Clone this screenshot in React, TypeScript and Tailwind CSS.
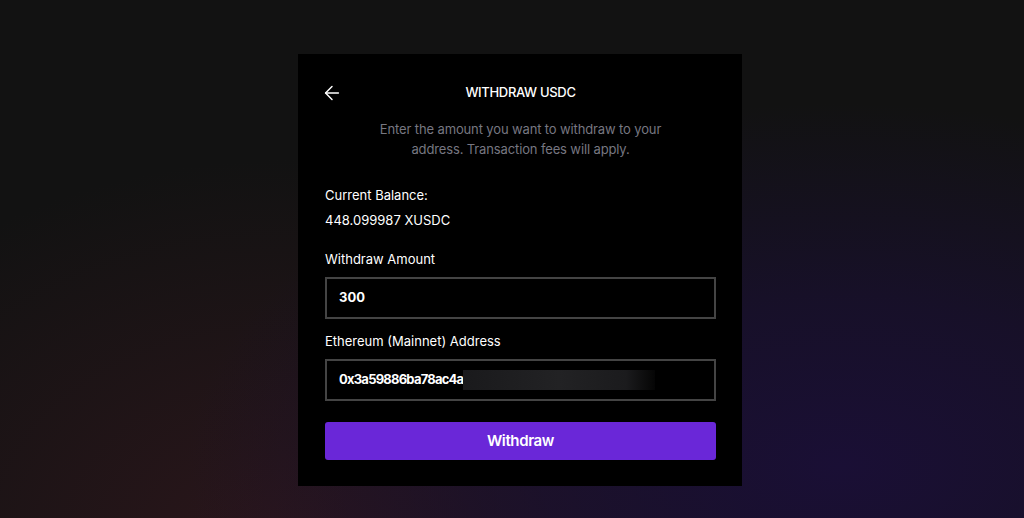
import { ArrowLeft } from 'lucide-react';

export default function App() {
  return (
    <div
      className="min-h-screen w-full flex justify-center pt-[54px] pl-4 bg-[#121212] bg-[radial-gradient(ellipse_at_82%_90%,#1a0f35_0%,rgba(26,15,53,0.65)_25%,transparent_55%),radial-gradient(ellipse_at_28%_105%,#2b161b_0%,rgba(43,22,27,0.5)_25%,transparent_50%)]"
      style={{ fontFamily: 'Inter, "Noto Sans", sans-serif' }}
    >
      <div className="w-[444px] h-[432px] bg-black pl-[27px] pr-[26px] pt-[29px] flex flex-col">
        <div className="relative flex items-center justify-center h-5">
          <button className="absolute -left-[4px] text-white">
            <ArrowLeft className="w-[22px] h-[22px]" strokeWidth={1.6} />
          </button>
          <h1 className="text-[13px] font-medium text-white tracking-tight">WITHDRAW USDC</h1>
        </div>

        <p className="mt-4 mx-auto w-[300px] text-center text-[13px] leading-5 text-[#777781] tracking-[-0.01em]">
          Enter the amount you want to withdraw to your address. Transaction fees will apply.
        </p>

        <div className="mt-[26px] text-[13px] leading-5 text-white">Current Balance:</div>
        <div className="mt-[5px] text-[13px] leading-5 text-white">448.099987 XUSDC</div>

        <label className="mt-[19px] text-[13px] leading-5 text-white">Withdraw Amount</label>
        <div className="mt-2 h-[42px] border-2 border-[#444] flex items-center pl-3">
          <span className="text-[13px] font-bold text-white">300</span>
        </div>

        <label className="mt-3 text-[13px] leading-5 text-white">Ethereum (Mainnet) Address</label>
        <div className="mt-2 h-[42px] border-2 border-[#444] flex items-center pl-3">
          <span className="text-[13px] font-bold text-white tracking-[-0.06em]">0x3a59886ba78ac4a</span>
          <div className="w-[192px] h-[20px] bg-[linear-gradient(90deg,#1a1a1c_0%,#222224_50%,#1b1b1d_85%,#050505_100%)]" />
        </div>

        <button className="mt-[21px] h-[38px] rounded-[3px] bg-[#6a27d8] text-white text-[15px] font-semibold tracking-tight">
          Withdraw
        </button>
      </div>
    </div>
  );
}
